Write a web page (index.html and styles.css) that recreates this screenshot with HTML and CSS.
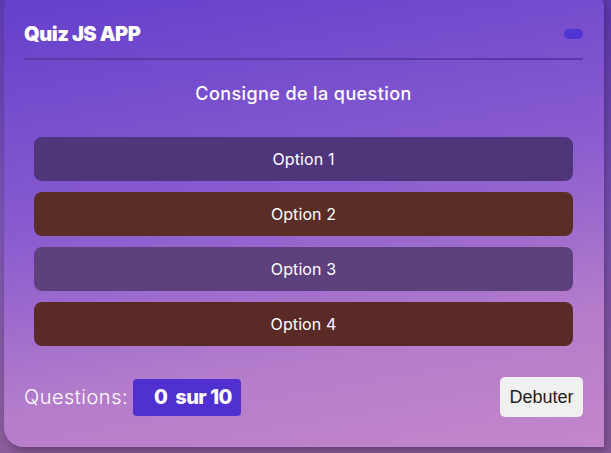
FILE: index.html
```html
<!DOCTYPE html>
<html lang="fr">
<head>
<meta charset="utf-8">
<title>Quiz JS APP</title>
<link rel="stylesheet" href="styles.css">
</head>
<body>
<div class="card">
  <div class="header">
    <h1 class="title">Quiz JS APP</h1>
    <span class="pill"></span>
  </div>
  <p class="question">Consigne de la question</p>
  <div class="options">
    <button class="option opt-purple">Option 1</button>
    <button class="option opt-brown">Option 2</button>
    <button class="option opt-violet">Option 3</button>
    <button class="option opt-brown2">Option 4</button>
  </div>
  <div class="footer">
    <div class="count">
      <span class="count-label">Questions:</span>
      <span class="badge">0&nbsp;&nbsp;sur 10</span>
    </div>
    <button class="start">Debuter</button>
  </div>
</div>
</body>
</html>
```
FILE: styles.css
```css
html, body {
  margin: 0;
  padding: 0;
}
body {
  width: 611px;
  height: 453px;
  overflow: hidden;
  background: linear-gradient(180deg, #5e3cb0 0%, #7a55b0 50%, #8a5e98 100%);
  font-family: "Inter", "Noto Sans", sans-serif;
}
.card {
  box-sizing: border-box;
  width: 600px;
  height: 459px;
  margin: -12px 0 0 4px;
  padding: 24px 21px 0 20px;
  border-radius: 20px 20px 0 20px;
  background: linear-gradient(170deg, #623ecb 0%, #8a5ccf 45%, #b47ccb 75%, #c386ca 100%);
  box-shadow: 3px 5px 8px rgba(40, 10, 60, 0.35);
  color: #fff;
}
.header {
  height: 46px;
  display: flex;
  align-items: center;
  justify-content: space-between;
  border-bottom: 2px solid #5a38a6;
}
.title {
  margin: -2px 0 0;
  font-size: 20px;
  font-weight: 900;
  letter-spacing: -0.5px;
  color: #fff;
}
.pill {
  width: 19px;
  height: 10px;
  border-radius: 5px;
  background: #4e34d2;
  margin-top: -2px;
}
.question {
  margin: 22px 0 31px;
  line-height: 24px;
  font-size: 18px;
  font-weight: 500;
  letter-spacing: 0.4px;
  text-align: center;
}
.options {
  display: grid;
  gap: 11px;
  padding: 0 10px;
}
.option {
  height: 44px;
  border: none;
  border-radius: 8px;
  color: #fff;
  font-family: inherit;
  font-size: 16px;
  font-weight: 400;
  letter-spacing: 0.1px;
}
.opt-purple { background: #4f367b; }
.opt-brown { background: #5a2d27; }
.opt-violet { background: #5e407c; }
.opt-brown2 { background: #5a2b26; }
.footer {
  margin-top: 31px;
  height: 40px;
  display: flex;
  align-items: center;
  justify-content: space-between;
}
.count {
  display: flex;
  align-items: center;
  gap: 5px;
}
.count-label {
  font-size: 20px;
  font-weight: 300;
  letter-spacing: 0.5px;
}
.badge {
  height: 37px;
  box-sizing: border-box;
  display: flex;
  align-items: center;
  padding: 0 9px 0 21px;
  width: 108px;
  border-radius: 4px;
  background: #5130d2;
  font-size: 20px;
  font-weight: 800;
  letter-spacing: -0.5px;
}
.start {
  width: 83px;
  height: 40px;
  border: none;
  border-radius: 5px;
  background: #f0f0f0;
  color: #1e1e1e;
  font-family: "Liberation Sans", Arial, sans-serif;
  font-size: 18px;
  padding: 0;
}
```
